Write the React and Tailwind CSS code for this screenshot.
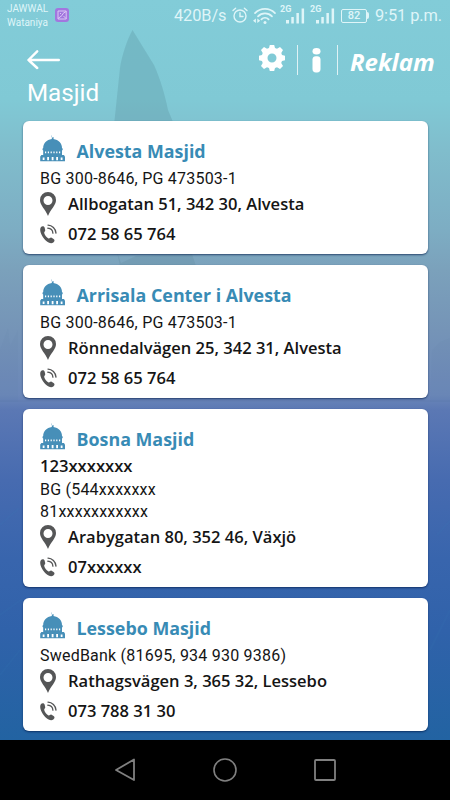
import React from "react";

const places = [
  { name: "Alvesta Masjid", info: [{ text: "BG 300-8646, PG 473503-1" }], address: "Allbogatan 51, 342 30, Alvesta", phone: "072 58 65 764" },
  { name: "Arrisala Center i Alvesta", info: [{ text: "BG 300-8646, PG 473503-1" }], address: "Rönnedalvägen 25, 342 31, Alvesta", phone: "072 58 65 764" },
  { name: "Bosna Masjid", info: [{ text: "123xxxxxxx", strong: true }, { text: "BG (544xxxxxxx" }, { text: "81xxxxxxxxxxx" }], address: "Arabygatan 80, 352 46, Växjö", phone: "07xxxxxx" },
  { name: "Lessebo Masjid", info: [{ text: "SwedBank (81695, 934 930 9386)" }], address: "Rathagsvägen 3, 365 32, Lessebo", phone: "073 788 31 30" },
];

function Backdrop() {
  return (
    <svg className="absolute inset-0" width="450" height="740" viewBox="0 0 450 740" fill="none">
      <path d="M132.5 30C127 40 122 55 120 68L113 135L119 172L194 172C183 145 170 115 168 110C165 95 160 78 154 65Z" fill="#4b7d88" fillOpacity=".22" />
      <path d="M117 252L121 263L136 256L192 254L196 266H120Z" fill="#456f80" fillOpacity=".14" />
      <path d="M0 350L8 328L10 346L18 330V402H0ZM432 350L440 342L450 338V402H430Z" fill="#5376a5" fillOpacity=".05" />
      <path d="M0 401H450" stroke="#5673a9" strokeOpacity=".3" />
      <path d="M0 525L19 508M0 615L22 599M430 650L450 610M0 675L20 650M437 535L450 521" stroke="#397eb8" strokeOpacity=".1" strokeWidth="2" />
    </svg>
  );
}

function MosqueIcon() {
  return (
    <svg className="shrink-0" width="26" height="27" viewBox="0 0 26 27" fill="none">
      <path d="M11.2 0C10.6 1.8 11.8 3.2 14 2.3L13.4 4.1C18.6 4.8 22 8.6 22 13C23 13.4 23 15.2 22 15.4V20.5H3.2V15.4C2.2 15.2 2.2 13.4 3.2 13C3.2 8.6 6.6 4.8 11.8 4.1L11.9 2.8Z" fill="#478fb8" />
      <path d="M5.6 16.4V18.2M8.4 16.4V18.2M11.2 16.4V18.2M14 16.4V18.2M16.8 16.4V18.2M19.6 16.4V18.2" stroke="white" strokeWidth="1.2" />
      <path d="M1.4 20H23.9L25 21.4V26.3H.2V21.4Z" fill="#478fb8" />
      <path d="M3.6 25V22.6M8.1 25.2V22M12.6 25.2V22M17.1 25.2V22M21.6 25V22.6" stroke="white" strokeWidth="1.8" />
    </svg>
  );
}

function PinIcon() {
  return (
    <svg className="mb-[2px] shrink-0" width="16" height="24" viewBox="0 0 16 24">
      <path fill="#555657" fillRule="evenodd" d="M8 0A8 8 0 0 0 0 8C0 13.2 5.3 17.2 8 24C10.7 17.2 16 13.2 16 8A8 8 0 0 0 8 0ZM8 4A4.5 4.5 0 1 1 8 13A4.5 4.5 0 0 1 8 4Z" />
    </svg>
  );
}

function PhoneIcon() {
  return (
    <svg className="mb-[2px] shrink-0" width="17" height="20" viewBox="0 0 17 20" fill="none">
      <path d="M1 3C2.2 1.8 4 2 4.6 3.6L5.2 6C5.5 7.4 3.9 8 4.2 9.1C4.9 11.5 6.5 13.4 8.6 14.4C9.6 14.9 10 13.3 11.2 13.5L13.6 15C15 15.8 14.7 17.5 13.3 18.6C11.3 20 8.5 19 6 16.7C2.6 13.5-1.6 6.3 1 3Z" fill="#555657" />
      <path d="M8 1.1C12 1.1 15.8 5 16 9.1M7.8 4.2C10.7 4.4 12.7 6.5 12.9 9.2" stroke="#555657" strokeWidth="1.3" strokeLinecap="round" />
    </svg>
  );
}

function Signal() {
  return (
    <div className="relative h-[20px] w-[25px]">
      <span className="absolute left-0 top-0 text-[9px] leading-[10px] font-bold">2G</span>
      <svg className="absolute left-[6px] top-[4px]" width="19" height="16" viewBox="0 0 19 16">
        <path fill="currentColor" d="M0 12H3V15.5H0ZM5.3 9H7.8V15.5H5.3ZM10.4 5H12.9V15.5H10.4ZM15.6.5H18.1V15.5H15.6Z" />
      </svg>
    </div>
  );
}

function StatusBar() {
  return (
    <div className="flex h-[31px] shrink-0 items-center pl-[7px] font-[Roboto,sans-serif] text-[#dff5f8]">
      <div className="w-[48px] shrink-0 text-[10px] leading-[14px]">
        <div>JAWWAL</div>
        <div>Wataniya</div>
      </div>
      <svg className="mb-px shrink-0" width="14" height="14" viewBox="0 0 14 14" fill="none">
        <rect width="14" height="14" rx="3" fill="#a276df" />
        <path d="M3 3H11.2V11H3ZM3 10.5L7 7.5L8 5.5L11 3.5M5 5.5H6M8.5 8L11 10.5" stroke="#dbc9f5" strokeWidth="1" />
      </svg>
      <span className="ml-[105px] w-[53px] shrink-0 whitespace-nowrap text-[16.4px] leading-5 tracking-[-0.1px]">420B/s</span>
      <svg className="ml-[5px] shrink-0" width="16" height="17" viewBox="0 0 16 17" fill="none" stroke="currentColor" strokeWidth="1.4" strokeLinecap="round">
        <circle cx="8" cy="9" r="6" />
        <path d="M8 5.8V9.5H11M1 3.5L3.6 1.3M12.4 1.3L15 3.5" />
      </svg>
      <svg className="ml-[5px] shrink-0" width="23" height="18" viewBox="0 0 23 18" fill="none" stroke="currentColor" strokeWidth="1.7" strokeLinecap="round">
        <path d="M2 6.1C7.4.4 16.6.4 22 6.1M5 9.3C8.8 5.3 15.2 5.3 19 9.3M8.4 12.4C10.4 10.2 13.6 10.2 15.6 12.4" />
        <circle cx="12" cy="15.5" r="1.5" fill="currentColor" stroke="none" />
        <path d="M2.9 11.5V16L0 13.8ZM4.3 11.5V16L7.2 13.8Z" fill="currentColor" stroke="none" />
      </svg>
      <div className="ml-[4px] mb-[4px] shrink-0"><Signal /></div>
      <div className="ml-[5px] mb-[4px] shrink-0"><Signal /></div>
      <div className="ml-[6px] flex shrink-0 items-center">
        <div className="flex h-[14px] w-[26px] items-center justify-center rounded-[2px] border border-current text-[11px] leading-none font-medium">82</div>
        <div className="h-[7px] w-[2px] rounded-r-sm bg-current" />
      </div>
      <span className="ml-[6px] whitespace-nowrap text-[16.4px] leading-5 tracking-[-0.1px]">9:51 p.m.</span>
    </div>
  );
}

function Header() {
  return (
    <header className="h-[90px] shrink-0 text-white">
      <div className="flex h-[47px] items-start pl-[27px]">
        <svg className="mt-[19px]" width="34" height="20" viewBox="0 0 34 20" fill="none" stroke="currentColor" strokeWidth="2.4" strokeLinecap="round" strokeLinejoin="round">
          <path d="M31.8 10H1.5M10.2 1.3L1.5 10L10.2 18" />
        </svg>
        <svg className="ml-[198px] mt-[14px]" width="26" height="26" viewBox="0 0 26 26">
          <path fill="currentColor" fillRule="evenodd" d="M10.8 0H15.2L16 3L18 3.8L21 2L24 5L22.3 8L23 10L26 10.8V15.2L23 16L22.2 18L24 21L21 24L18 22.3L16 23L15.2 26H10.8L10 23L8 22.2L5 24L2 21L3.7 18L3 16L0 15.2V10.8L3 10L3.7 8L2 5L5 2L8 3.8L10 3ZM13 8.5A4.5 4.5 0 1 0 13 17.5A4.5 4.5 0 0 0 13 8.5Z" />
        </svg>
        <div className="ml-[12px] mt-[14px] h-[30px] w-px bg-white/75" />
        <svg className="ml-[14px] mt-[17px]" width="9" height="25" viewBox="0 0 9 25" fill="currentColor">
          <ellipse cx="4.5" cy="3.2" rx="4" ry="3.2" /><rect x=".5" y="8.2" width="8" height="16.2" rx="3.4" />
        </svg>
        <div className="ml-[16px] mt-[14px] h-[30px] w-px bg-white/75" />
        <span className="ml-[12px] mt-[15px] font-['Open_Sans',sans-serif] text-[24px] leading-[32px] font-bold italic">Reklam</span>
      </div>
      <h1 className="pl-[27px] pt-px font-[Roboto,sans-serif] text-[24.2px] leading-[28px] font-normal">Masjid</h1>
    </header>
  );
}

function PlaceCard({ place }) {
  return (
    <article className="rounded-[6px] bg-white pb-[4px] pl-[17.5px] text-[#151515] shadow-[0_1px_2px_rgba(0,25,70,0.65)]">
      <div className="flex h-[46px] items-start pt-[14px]">
        <MosqueIcon />
        <h2 className="ml-[10.5px] mt-[2.5px] font-['Open_Sans',sans-serif] text-[17.85px] leading-[26px] font-bold text-[#388bb5]">{place.name}</h2>
      </div>
      {place.info.map(({ text, strong }) => (
        <p key={text} className={strong ? "font-['Open_Sans',sans-serif] text-[16.6px] leading-[22.5px] font-semibold" : "pt-px font-[Roboto,sans-serif] text-[16px] leading-[21.5px] tracking-[0.22px]"}>{text}</p>
      ))}
      <div className="flex h-[30px] items-center font-['Open_Sans',sans-serif] text-[16.55px] font-semibold">
        <PinIcon /><span className="ml-[12px]">{place.address}</span>
      </div>
      <div className="flex h-[30px] items-center font-['Open_Sans',sans-serif] text-[16.55px] font-semibold">
        <PhoneIcon /><span className="ml-[11px]">{place.phone}</span>
      </div>
    </article>
  );
}

export default function App() {
  return (
    <div className="relative flex h-[800px] w-[450px] flex-col overflow-hidden bg-[linear-gradient(#82ccd8_0px,#80c9d5_100px,#80bdcc_150px,#7dadc3_230px,#7ba1bb_270px,#7594b7_330px,#6b87b8_395px,#5b78b4_410px,#476bb0_480px,#3865ad_560px,#3062aa_630px,#2263a2_740px)]">
      <Backdrop />
      <div className="relative flex h-[740px] flex-col">
        <StatusBar />
        <Header />
        <main className="flex flex-col gap-[11.6px] px-[22.5px]">
          {places.map((place) => <PlaceCard key={place.name} place={place} />)}
        </main>
      </div>
      <nav className="relative flex h-[60px] shrink-0 items-center justify-center gap-[76px] bg-black text-[#808080]">
        <svg width="24" height="26" viewBox="0 0 24 26" fill="none" stroke="currentColor" strokeWidth="1.8" strokeLinejoin="round"><path d="M21 2.5V23L3 13Z" /></svg>
        <svg width="24" height="24" viewBox="0 0 24 24" fill="none" stroke="currentColor" strokeWidth="1.6"><circle cx="12" cy="12" r="11" /></svg>
        <svg width="24" height="24" viewBox="0 0 24 24" fill="none" stroke="currentColor" strokeWidth="1.8"><rect x="2" y="2" width="20" height="20" rx="1" /></svg>
      </nav>
    </div>
  );
}
